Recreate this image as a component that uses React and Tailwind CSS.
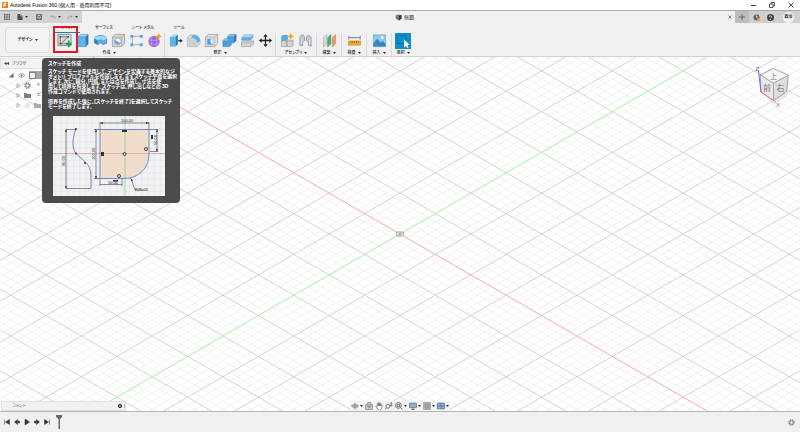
import React from 'react';
import clsx from 'clsx';

const FONT = "font-['Liberation_Sans','Noto_Sans_CJK_JP',sans-serif]";

/* ---------- small shared pieces ---------- */

function Svg({ className = 'size-4', box = '0 0 16 16', children }) {
  return (
    <svg viewBox={box} className={clsx('shrink-0', className)} fill="none" aria-hidden="true">
      {children}
    </svg>
  );
}

function Caret({ className = 'w-[3px] h-[2px]' }) {
  return (
    <Svg box="0 0 6 4" className={className}>
      <path d="M0 0h6L3 4z" fill="#333" />
    </Svg>
  );
}

/* ---------- toolbar icons ---------- */

const icons = {
  sketch: (
    <>
      <path d="M1 1.500h14v12H1z" fill="#dcdcdc" stroke="#8e8e8e" />
      <path d="M3.500 4v7.500h6.500M3.500 4h8.500M12 4L4 11.500" stroke="#555" strokeWidth=".8" />
      <path d="M2.700 3.200h1.700v1.700H2.700zM11.200 3.200h1.700v1.700h-1.700zM2.700 10.600h1.700v1.700H2.700z" fill="#444" />
      <path d="M10 9h2.200V6.800h2V9h2v2.200h-2v2.600h-2v-2.600H10z" transform="translate(-.6 1.500)" fill="#22a447" />
    </>
  ),
  extrude: (
    <>
      <path d="M3 4l3-2.500h8L11.500 4z" fill="#a5d4f5" />
      <path d="M3 4h8.500v10.500H3z" fill="#62b2ec" />
      <path d="M11.500 4L14 1.500V12l-2.500 2.500z" fill="#2579bd" />
      <path d="M3 4l3-2.500h8V12l-2.500 2.500H3zM3 4h8.500L14 1.500M11.500 4v10.500" stroke="#2f79b2" strokeWidth=".5" />
    </>
  ),
  revolve: (
    <>
      <path d="M1.500 6C2 1.500 14 1.500 14.500 6v5l-4 1.500C10 10 6 10 5.500 12.500l-4-2z" fill="#5aaee8" stroke="#2a6fa8" strokeWidth=".6" />
      <path d="M1.500 6C2 2 14 2 14.500 6L11 8C10 6.500 6 6.500 5 8z" fill="#a4d3f3" />
      <path d="M5 8v4.500L1.500 10.500V6z" fill="#2f7fbe" />
    </>
  ),
  hole: (
    <>
      <path d="M1.500 4.500l3-3h10v9.500l-3 3.500h-10z" fill="#d9d9d9" stroke="#8d8d8d" strokeWidth=".7" />
      <path d="M1.500 4.500h10v10M11.500 4.500l3-3" stroke="#9a9a9a" strokeWidth=".6" />
      <circle cx="7" cy="9" r="3.700" fill="#f7f7f7" stroke="#7b8d9c" strokeWidth=".6" />
      <path d="M4 7.200L10 11.200A3.700 3.700 0 014 7.200z" fill="#4ea6e4" />
    </>
  ),
  pattern: (
    <>
      <path d="M3.500 3.500h9.500M3.500 3.500v9h9.500" stroke="#8d99a3" strokeWidth=".8" />
      <path d="M1.500 2h3v3h-3zM11.500 2h3v3h-3zM1.500 11h3v3h-3zM11.500 11h3v3h-3z" fill="#53a4dc" />
    </>
  ),
  form: (
    <>
      <circle cx="7.500" cy="9" r="6" fill="#9669cf" />
      <path d="M2 6.500c3 2 8 2 11 0M1.700 10.500c3 2.200 8.500 2.200 11.600 0M5.500 3.500c-1.500 4-1.500 7.500 0 11M9.500 3.500c1.500 4 1.500 7.500 0 11" stroke="#c9b0ea" strokeWidth=".7" />
      <path d="M12.500 0l1 2.300L16 3.500l-2.500 1.200-1 2.300-1-2.300L9 3.500l2.500-1.200z" fill="#f5a21b" />
    </>
  ),
  pressPull: (
    <>
      <path d="M2 4l3-2.500h5L8 4z" fill="#a5d4f5" />
      <path d="M2 4h6v10.500H2z" fill="#62b2ec" />
      <path d="M8 4l2.500-2.500V12L8 14.500z" fill="#2579bd" />
      <path d="M11 7.500h2V6l2.800 2.200-2.800 2.300V9h-2z" fill="#333" />
    </>
  ),
  fillet: (
    <>
      <path d="M1.500 5l3-3h4c4 0 6.500 3 6.500 6.500V11l-3 3.500H1.500z" fill="#e0e0e0" stroke="#8f8f8f" strokeWidth=".6" />
      <path d="M5 5l2.500-3h1C12 2 15 5 15 8.500L12 11c0-3.500-3-6-7-6z" fill="#5eafe8" />
      <path d="M1.500 5H5c4 0 7 2.500 7 6.500v3H1.500z" fill="#cfcfcf" />
    </>
  ),
  shell: (
    <>
      <path d="M1.500 4.500l3-3h10v9.500l-3 3.500h-10z" fill="#e4e4e4" stroke="#8d8d8d" strokeWidth=".7" />
      <path d="M1.500 4.500h10v10M11.500 4.500l3-3" stroke="#9a9a9a" strokeWidth=".6" />
      <path d="M3.500 6.500h6v6h-6z" fill="#fff" stroke="#87929b" strokeWidth=".5" />
      <path d="M3.500 6.500v6h6L7 10V6.500z" fill="#4ea1dd" />
    </>
  ),
  combine: (
    <>
      <path d="M1 8l2-2h3V3.500L8 1.500h7V8l-2.500 2.500H10v2L8 14.500H1z" fill="#4b9fde" stroke="#2a70a9" strokeWidth=".5" />
      <path d="M6 3.500L8 1.500h7L12.800 3.500zM1 8l2-2h3v2z" fill="#8cc6f0" />
      <path d="M12.800 3.500L15 1.500V8l-2.200 2.500z" fill="#2878ba" />
    </>
  ),
  split: (
    <>
      <path d="M1.500 5l3-3.500h10l-1 4-2.500 2.500h-9.500z" fill="#5aace6" />
      <path d="M1.500 4.500l3-3h10l-3 3z" fill="#a3d3f4" />
      <path d="M1.500 10l2-1.500h11v3l-3 3h-10z" fill="#d5d5d5" stroke="#8b8b8b" strokeWidth=".6" />
      <path d="M1.500 10.500h10v4M11.500 10.500l3-2" stroke="#999" strokeWidth=".5" />
    </>
  ),
  move: (
    <path
      d="M8 1l2.300 3H8.700v3.300H12V5.700L15 8l-3 2.300V8.700H8.700V12h1.600L8 15l-2.300-3h1.600V8.700H4v1.600L1 8l3-2.300v1.600h3.300V4H5.700z"
      fill="#222"
    />
  ),
  component: (
    <>
      <path d="M1.500 4l1.500-1.500h5V8H1.500z" fill="#58aae6" stroke="#3a7fb5" strokeWidth=".4" />
      <path d="M1.500 8.500H7v6H1.500zM7.500 8.500H13v6H7.500z" fill="#d8d8d8" stroke="#8a8a8a" strokeWidth=".6" />
      <path d="M7.500 8.500L9 7h5.500L13 8.500zM13 8.500L14.500 7v6L13 14.500z" fill="#b9b9b9" />
      <path d="M11.500 0l1 2.300L15 3.500l-2.500 1.200-1 2.300-1-2.300L8 3.500l2.500-1.200z" fill="#f5a21b" />
    </>
  ),
  joint: (
    <>
      <path d="M2 13V6c0-5 5-5 5-1v3l-2 1v4.500zM14 14V6.500c0-5-5-5-5-1V8l2 1v4z" fill="#c6cbcf" stroke="#818b93" strokeWidth=".8" />
      <path d="M4 12V6.500M12.500 12.500V7" stroke="#eef1f3" strokeWidth=".9" />
    </>
  ),
  construct: (
    <>
      <path d="M1.500 5L5 1.500v10L1.500 15z" fill="#d9d9d9" stroke="#999" strokeWidth=".5" />
      <path d="M6 5l3.500-3.500v10L6 15z" fill="#48b07c" stroke="#2e8a5b" strokeWidth=".5" />
      <path d="M11 5l3.500-3.500v10L11 15z" fill="#f09a66" stroke="#c8743f" strokeWidth=".5" />
    </>
  ),
  inspect: (
    <>
      <path d="M2 3v4M14 3v4M2.500 5h11" stroke="#666" strokeWidth=".9" />
      <path d="M1.500 8.500h13v4.500h-13z" fill="#f0a932" stroke="#b87a17" strokeWidth=".5" />
      <path d="M4 8.500v2M6 8.500v2M8 8.500v2M10 8.500v2M12 8.500v2" stroke="#7c4f08" strokeWidth=".6" />
    </>
  ),
  insert: (
    <>
      <path d="M1.500 2h13v12.500h-13z" fill="#8fc8ee" stroke="#5b9bc9" strokeWidth=".6" />
      <path d="M1.500 14.500V11L5.500 6l4 4.500 2-2 3 3v3z" fill="#3585c0" />
      <circle cx="11" cy="5" r="1.500" fill="#fff" />
    </>
  ),
  select: (
    <>
      <path d="M0 0h16v16H0z" fill="#0d8ecb" />
      <path d="M2.500 2.500h8.500v8H2.500z" stroke="#0b5f8a" strokeWidth=".7" strokeDasharray="1.500 1" />
      <path d="M9 6.500v8l2-1.800 1.200 2.600 1.400-.7-1.200-2.500h2.600z" fill="#fff" />
    </>
  ),
};

const groups = [
  {
    label: '作成',
    pad: 'pr-px',
    items: [
      ['sketch', 'スケッチを作成'],
      ['extrude', '押し出し'],
      ['revolve', '回転'],
      ['hole', '穴'],
      ['pattern', '矩形状パターン'],
      ['form', 'フォームを作成'],
    ],
  },
  {
    label: '修正',
    pad: 'border-l px-px',
    items: [
      ['pressPull', 'プレス/プル'],
      ['fillet', 'フィレット'],
      ['shell', 'シェル'],
      ['combine', '結合'],
      ['split', 'ボディを分割'],
      ['move', '移動'],
    ],
  },
  {
    label: 'アセンブリ',
    pad: 'border-l px-[2px]',
    items: [
      ['component', '新規コンポーネント'],
      ['joint', 'ジョイント'],
    ],
  },
  { label: '構築', pad: 'border-l px-[3px]', items: [['construct', '平面']] },
  { label: '検査', pad: 'border-l px-[3px]', items: [['inspect', '計測']] },
  { label: '挿入', pad: 'border-l px-[3px]', items: [['insert', 'キャンバス']] },
  { label: '選択', pad: 'border-l px-[2px]', items: [['select', '選択ツール']] },
];

function TitleBar() {
  return (
    <header className="flex h-[10px] items-center bg-white pl-[2px] pr-[6px]">
      <Svg className="size-[6px]" box="0 0 12 12">
        <path d="M0 0h12v12H0z" fill="#f07d1a" />
        <path d="M4 10V2.500h5M4 6h4" stroke="#fff" strokeWidth="2" />
      </Svg>
      <h1 className="ml-[2px] flex-1 text-[5px] leading-[8px] text-black">
        Autodesk Fusion 360 (個人用 - 商用利用不可)
      </h1>
      <div className="flex gap-[13px]">
        <button type="button" aria-label="最小化">
          <Svg className="size-[5px]" box="0 0 10 10">
            <path d="M0 5h10" stroke="#222" strokeWidth="1.800" />
          </Svg>
        </button>
        <button type="button" aria-label="元のサイズに戻す">
          <Svg className="size-[6px]" box="0 0 12 12">
            <path d="M1 4h7v7H1zM4 4V1h7v7H8" stroke="#222" strokeWidth="1.500" />
          </Svg>
        </button>
        <button type="button" aria-label="閉じる">
          <Svg className="size-[6px]" box="0 0 12 12">
            <path d="M1 1l10 10M11 1L1 11" stroke="#222" strokeWidth="1.500" />
          </Svg>
        </button>
      </div>
    </header>
  );
}

function DocumentBar() {
  return (
    <div className="flex h-[13px] items-stretch border-t border-[#a9a9a9] bg-[#f0f0f0]">
      <div className="flex w-[82px] items-center bg-[#d2d2d2] pl-[4px]">
        <button type="button" aria-label="データ パネル">
          <Svg className="size-[6px]" box="0 0 12 12">
            <path d="M0 0h3v3H0zM4.500 0h3v3h-3zM9 0h3v3H9zM0 4.500h3v3H0zM4.500 4.500h3v3h-3zM9 4.500h3v3H9zM0 9h3v3H0zM4.500 9h3v3h-3zM9 9h3v3H9z" fill="#555" />
          </Svg>
        </button>
        <button type="button" aria-label="ファイル" className="ml-[7px] flex items-center gap-[2px]">
          <Svg className="size-[6px]" box="0 0 12 12">
            <path d="M1 0h6l4 4v8H1z" fill="#4d4d4d" />
            <path d="M7 0v4h4" stroke="#ddd" />
          </Svg>
          <Caret />
        </button>
        <button type="button" aria-label="保存" className="ml-[8px]">
          <Svg className="size-[6px]" box="0 0 12 12">
            <path d="M1 1h10v10H1zM3 1v4h6V1M3 11V8h6v3" stroke="#555" strokeWidth="1.500" />
          </Svg>
        </button>
        <button type="button" aria-label="元に戻す" className="ml-[8px] flex items-center gap-[2px]">
          <Svg className="size-[6px]" box="0 0 12 12">
            <path d="M5 2L2 5l3 3M2 5h5c3 0 4 2 3 5" stroke="#9a9a9a" strokeWidth="1.600" />
          </Svg>
          <Caret />
        </button>
        <button type="button" aria-label="やり直し" className="ml-[6px] flex items-center gap-[2px]">
          <Svg className="size-[6px]" box="0 0 12 12">
            <path d="M7 2l3 3-3 3M10 5H5C2 5 1 7 2 10" stroke="#9a9a9a" strokeWidth="1.600" />
          </Svg>
          <Caret />
        </button>
      </div>
      <div className="flex flex-1 items-center justify-center gap-[2px] text-[5px] leading-[6px] text-[#222]">
        <Svg className="size-[7px]" box="0 0 14 14">
          <path d="M1 3l5-2 7 1v7l-5 4-6-3z" fill="#777" />
          <path d="M8 4l5-2v7l-5 4z" fill="#333" />
        </Svg>
        無題
      </div>
      <button type="button" aria-label="タブを閉じる" className="mr-[2px] px-px">
        <Svg className="size-[4px]" box="0 0 8 8">
          <path d="M1 1l6 6M7 1L1 7" stroke="#444" strokeWidth="1.300" />
        </Svg>
      </button>
      <div className="flex w-[65px] items-center bg-[#cfcfcf]">
        <button type="button" aria-label="新規デザイン" className="flex h-full w-[14px] items-center justify-center bg-[#bdbdbd]">
          <Svg className="size-[6px]" box="0 0 12 12">
            <path d="M6 0v12M0 6h12" stroke="#666" strokeWidth="2" />
          </Svg>
        </button>
        <button type="button" aria-label="ジョブ ステータス" className="ml-[4px]">
          <Svg className="size-[7px]" box="0 0 14 14">
            <circle cx="7" cy="7" r="6" fill="#606060" />
            <path d="M7 3v4l3-2" stroke="#fff" strokeWidth="1.300" />
            <circle cx="11" cy="11" r="3" fill="#f0a030" />
          </Svg>
        </button>
        <button type="button" aria-label="ヘルプ" className="ml-[7px]">
          <Svg className="size-[7px]" box="0 0 14 14">
            <circle cx="7" cy="7" r="7" fill="#444" />
            <path d="M5 5.500C5 3 9 3 9 5.500 9 7 7 7 7 8.500M7 10v1.500" stroke="#fff" strokeWidth="1.500" />
          </Svg>
        </button>
        <button type="button" className="ml-[9px] flex size-[11px] shrink-0 items-center justify-center rounded-full bg-[#f4f4f4] text-[4px] leading-[6px] font-bold whitespace-nowrap text-[#222]">
          政治
        </button>
      </div>
    </div>
  );
}

function Toolbar() {
  return (
    <div className="flex h-[34px] border-b border-[#d0d0d0] bg-[#f0f0f0] pl-[5px]">
      <button
        type="button"
        className="mt-[4px] mr-[5px] flex h-[26px] w-[45px] items-center justify-center gap-[2px] rounded-sm border border-[#dcdcdc] bg-[#f3f3f3] text-[4px] font-bold text-[#222]"
      >
        デザイン <Caret />
      </button>
      <div className="flex flex-col">
        <nav className="flex h-[10px] text-[4px] leading-[8px] font-medium whitespace-nowrap text-[#333]">
          <button type="button" className="w-[25px] border-b border-[#1b80b4]">ソリッド</button>
          <button type="button" className="ml-[15px]">サーフェス</button>
          <button type="button" className="ml-[19px]">シート メタル</button>
          <button type="button" className="ml-[19px]">ツール</button>
        </nav>
        <div className="flex">
          {groups.map((group) => (
            <section key={group.label} className={clsx('flex flex-col items-center border-[#dadada]', group.pad)}>
              <div className="flex h-4">
                {group.items.map(([icon, name]) => (
                  <button key={icon} type="button" aria-label={name} className="relative flex w-[18px] justify-center">
                    <Svg className={icon === 'select' ? 'size-4' : 'size-[15px]'}>{icons[icon]}</Svg>
                    {icon === 'sketch' && (
                      <span className="absolute -top-[7px] -left-[2px] h-[27px] w-[25px] border-2 border-[#e81523]" />
                    )}
                  </button>
                ))}
              </div>
              <button type="button" className="flex items-center gap-[2px] text-[4px] leading-[7px] font-medium whitespace-nowrap text-[#222]">
                {group.label} <Caret />
              </button>
            </section>
          ))}
        </div>
      </div>
    </div>
  );
}

/* ---------- canvas ---------- */

const STEP_X = 7.08;
const STEP_Y = 4.08;

function Grid() {
  const lines = [];
  for (let i = -120; i <= 120; i++) {
    const y = i * STEP_Y * 2;
    const major = i % 5 === 0;
    const reach = 800;
    const rise = (reach * STEP_Y) / STEP_X;
    const color = major ? '#cacaca' : '#eeeeee';
    if (i !== 0) {
      lines.push({ d: `M${-reach} ${y - rise}L${reach} ${y + rise}`, color, major });
      lines.push({ d: `M${-reach} ${y + rise}L${reach} ${y - rise}`, color, major });
    }
  }
  // major lines go on top of the minor ones
  lines.sort((a, b) => a.major - b.major);
  return (
    <svg viewBox="-400 -177 800 354" preserveAspectRatio="xMidYMid slice" className="absolute inset-0 size-full" aria-hidden="true">
      {lines.map((line) => (
        <path key={line.d} d={line.d} stroke={line.color} strokeWidth={line.major ? 0.8 : 0.7} />
      ))}
      <path d="M-800 -461L800 461" stroke="#f2a3a3" strokeWidth=".9" />
      <path d="M-800 461L800 -461" stroke="#9fec9f" strokeWidth=".9" />
      <rect x="-3.500" y="-2" width="7" height="4" rx="1" fill="#e8e8e0" stroke="#8f9380" strokeWidth=".8" />
      <circle r="1" fill="#8f9380" />
    </svg>
  );
}

function ViewCube() {
  return (
    <svg viewBox="750 62 50 48" className="absolute top-[5px] right-0 h-[48px] w-[50px]" role="img" aria-label="ビューキューブ">
      <path d="M761 93l13 9 14-10-1 4-13 9z" fill="#ddd" opacity=".7" />
      <path d="M773.500 68.500L760.300 74.700l13 8.600 15-8z" fill="#f4f4f4" />
      <path d="M760.300 74.700L761 92l12.700 8.700-.4-17.400z" fill="#e9e9e9" />
      <path d="M788.300 75.300l-15 8 .4 17.400 13-9.400z" fill="#dedede" />
      <path d="M773.500 68.500L760.300 74.700 761 92l12.700 8.700 13-9.400 1.600-16zM760.300 74.700l13 8.600 15-8M773.300 83.300l.4 17.400" fill="none" stroke="#8f8f8f" strokeWidth=".8" />
      <path d="M758.500 71L761 92" stroke="#6a6ae8" strokeWidth="1" />
      <path d="M761 92l15 10" stroke="#e08080" strokeWidth="1" />
      <text x="755.500" y="71" fontSize="6" fill="#5555e0">Z</text>
      <text x="776" y="106.500" fontSize="6" fill="#e05555">X</text>
      <text x="770" y="78.500" fontSize="7" fill="#777">上</text>
      <text x="763" y="91" fontSize="8" fill="#777">前</text>
      <text x="776.500" y="91" fontSize="8" fill="#777">右</text>
    </svg>
  );
}

function Arrow({ open }) {
  return (
    <Svg className="size-[5px]" box="0 0 10 10">
      {open ? <path d="M9 0v9H0z" fill="#666" /> : <path d="M2 1l6 4-6 4z" stroke="#777" />}
    </Svg>
  );
}

function Eye({ dim }) {
  return (
    <Svg className="h-[5px] w-[7px]" box="0 0 14 10">
      <path d="M1 5c3-5 9-5 12 0-3 5-9 5-12 0z" stroke={dim ? '#ccc' : '#777'} strokeWidth="1.300" />
      <circle cx="7" cy="5" r="2" fill={dim ? '#ccc' : '#777'} />
    </Svg>
  );
}

function Folder({ dim }) {
  return (
    <Svg className="h-[5px] w-[7px]" box="0 0 14 10">
      <path d="M0 0h5l1 2h8v8H0z" fill={dim ? '#aaa' : '#808080'} />
    </Svg>
  );
}

function Gear({ className = 'size-[7px]' }) {
  return (
    <Svg className={className} box="0 0 14 14">
      <circle cx="7" cy="7" r="5" stroke="#777" strokeWidth="3" strokeDasharray="2.200 1.730" />
      <circle cx="7" cy="7" r="3.500" stroke="#777" strokeWidth="1.500" />
    </Svg>
  );
}

function BrowserPanel() {
  return (
    <aside className="relative w-[127px] text-[4px] leading-[10px] text-[#444]">
      <h2 className="flex h-[11px] items-center gap-[3px] border border-[#e2e2e2] bg-[#f3f3f3] pl-[3px]">
        <Svg className="h-[3px] w-[5px]" box="0 0 10 6">
          <path d="M5 0v6L0 3zM10 0v6L5 3z" fill="#333" />
        </Svg>
        ブラウザ
      </h2>
      <ul className="pt-px">
        <li className="flex h-[10px] items-center gap-[4px] pl-[9px]">
          <Arrow open />
          <Eye />
          <span className="flex h-[8px] w-[60px] items-center bg-[#a5a5a5]">
            <Svg className="size-[7px]" box="0 0 14 14">
              <path d="M1 1h12v12H1z" fill="#f3f3f3" stroke="#666" strokeWidth="1.500" />
            </Svg>
          </span>
        </li>
        <li className="flex h-[10px] items-center gap-[3px] pl-[16px]">
          <Arrow />
          <Gear />
          <span className="pl-[3px]">ド</span>
        </li>
        <li className="flex h-[10px] items-center gap-[3px] pl-[16px]">
          <Arrow />
          <Folder />
          <span className="pl-[3px]">ビ</span>
        </li>
        <li className="flex h-[10px] items-center gap-[3px] pl-[16px]">
          <Arrow />
          <Eye dim />
          <Folder dim />
        </li>
      </ul>
    </aside>
  );
}

function SketchPreview() {
  return (
    <svg viewBox="0 0 112 80" className="mt-[7px] ml-[5px] w-[112px] bg-[#f1f2f4] font-normal" role="img" aria-label="スケッチの例">
      {Array.from({ length: 19 }, (_, i) => (
        <path key={`v${i}`} d={`M${2 + i * 6.2} 0v80`} stroke="#e1e3e6" strokeWidth=".6" />
      ))}
      {Array.from({ length: 13 }, (_, i) => (
        <path key={`h${i}`} d={`M0 ${1 + i * 6.2}h112`} stroke="#e1e3e6" strokeWidth=".6" />
      ))}
      <path d="M47 13.500h49V38c0 14-10 24-24 24.500H47z" fill="#f0dccb" />
      <path d="M0 37.500h112" stroke="#e99a9a" strokeWidth=".7" />
      <path d="M72 0v80" stroke="#90c890" strokeWidth=".7" />
      <path d="M47 13.500h49V38c0 14-10 24-24 24.500H47z" fill="none" stroke="#7585c8" strokeWidth="1" />
      <path d="M23 13c-3 8-5 18 0 24.500C29 44 38 47 38 60v12" fill="none" stroke="#7585c8" strokeWidth="1" />
      {/* dimension lines */}
      <path d="M13 13.500h10M13 13.500v59h25M43 13.500v49M41 13.500h6M41 62.500h6M47 6v7M96 6v7M47 7h49M96 13.500h9M104 13.500V35M97 35.500h8M47 63v7M69 63v7M47 68.500h22M78 62.500L82 74h9" fill="none" stroke="#444" strokeWidth=".6" />
      <path d="M12 16l1-3 1 3zM12 70l1 3 1-3zM42 16l1-3 1 3zM42 60l1 3 1-3zM50 6l-3 1 3 1zM93 6l3 1-3 1zM103 16l1-3 1 3zM103 33l1 3 1-3zM77.500 62l2.500 2.500-1.500.8z" fill="#333" />
      <g fill="#333">
        <circle cx="23" cy="13" r="1" />
        <circle cx="23" cy="37.500" r="1" />
        <circle cx="32" cy="47" r="1" />
        <path d="M69 14h5v2h-5zM48 36h3v4h-3zM98 19h2v4h-2zM60 64h5v1.500h-5z" />
      </g>
      <g fill="none" stroke="#333" strokeWidth=".9">
        <circle cx="71.500" cy="38" r="1.500" />
        <circle cx="93" cy="33" r="1.500" />
        <circle cx="66" cy="60" r="1.500" />
      </g>
      <g fill="#222" fontSize="4">
        <text x="68" y="6">100.00</text>
        <text x="82" y="75">R25.00</text>
        <text x="55" y="68">50.00</text>
        <text transform="translate(12 50) rotate(-90)">90.00</text>
        <text transform="translate(42 44) rotate(-90)">100.00</text>
        <text transform="translate(103.500 29) rotate(-90)">50.00</text>
      </g>
    </svg>
  );
}

function Tooltip() {
  return (
    <div
      role="tooltip"
      className="absolute top-px left-[42px] w-[138px] rounded bg-[#4b4b4b] px-[6px] pt-[2px] pb-[7px] text-[5px] leading-[5px] font-bold whitespace-nowrap text-white"
    >
      <h3 className="mb-[3px] leading-[6px]">スケッチを作成</h3>
      <p>
        スケッチ モードを使用して、デザインを定義する基本的なジ<br />
        オメトリ プロファイルを作成します。まずスケッチ平面を選択<br />
        します。次に、線分、円弧、または点を作成し、寸法を使<br />
        用して境界を拘束します。スケッチは、押し出しなどの 3D<br />
        作成コマンドで使用されます。
      </p>
      <p className="mt-[5px]">
        境界を作成した後に、[スケッチを終了]を選択してスケッチ<br />
        モードを終了します。
      </p>
      <SketchPreview />
    </div>
  );
}

const navTools = [
  {
    name: 'オービット',
    menu: true,
    art: <path d="M7 1v12M4 4L1 7l3 3M10 4l3 3-3 3M3 7c2 3 6 3 8 0-2-3-6-3-8 0z" stroke="#555" strokeWidth="1.200" />,
  },
  {
    name: 'ビュー正面',
    art: <path d="M1 5h12v8H1zM3 5l2-4h5l1 4M3 8h8M5 10h4" stroke="#777" strokeWidth="1.200" fill="#d0d0d0" />,
  },
  {
    name: '画面移動',
    art: <path d="M4 8V3.500a1 1 0 012 0V7 2a1 1 0 012 0v5-4a1 1 0 012 0v4-2a1 1 0 012 0v4c0 3-2 5-4 5S5 13 4 11L1.500 8C2 6.500 3 7 4 8z" stroke="#555" fill="#fff" />,
  },
  {
    name: 'ズーム',
    art: <path d="M5 4a3.500 3.500 0 100 7 3.500 3.500 0 000-7zM2.500 10L0 13M11 1v6M9 3l2-2 2 2M9 5.500l2 2 2-2" stroke="#555" strokeWidth="1.300" />,
  },
  {
    name: 'フィット',
    menu: true,
    art: <path d="M6 1a5 5 0 100 10A5 5 0 006 1zM9.500 9.500L13 13M4 4h4v4H4z" stroke="#555" strokeWidth="1.400" />,
  },
  {
    name: '表示設定',
    menu: true,
    art: (
      <>
        <path d="M1 2h12v8H1z" fill="#8db3d4" stroke="#506a84" strokeWidth="1.200" />
        <path d="M7 10v3M4 13h6" stroke="#555" strokeWidth="1.300" />
      </>
    ),
  },
  {
    name: 'グリッドとスナップ',
    menu: true,
    art: <path d="M1 1h12v12H1zM1 4h12M1 7h12M1 10h12M4 1v12M7 1v12M10 1v12" fill="#c5c5c5" stroke="#888" />,
  },
  {
    name: 'ビューポート',
    menu: true,
    art: <path d="M1 2h12v10H1zM7 2v10M1 7h12" fill="#8fb8dc" stroke="#476f9d" strokeWidth="1.400" />,
  },
];

function CanvasFooter() {
  return (
    <div className="relative mt-auto flex h-[11px] items-center">
      <div className="ml-px flex h-[10px] w-[125px] items-center border border-[#e0e0e0] bg-[#f1f1f1] pl-[10px] text-[4px] text-[#555]">
        <span className="flex-1">コメント</span>
        <button type="button" aria-label="コメントを追加" className="mr-[2px]">
          <Svg className="size-[4px]" box="0 0 8 8">
            <circle cx="4" cy="4" r="4" fill="#222" />
            <path d="M4 2v4M2 4h4" stroke="#fff" strokeWidth="1" />
          </Svg>
        </button>
        <span className="h-[4px] w-px bg-[#bbb]" />
      </div>
      <div className="absolute inset-x-0 flex justify-center">
        <div className="flex h-[10px] items-center gap-[2px] bg-[#f3f3f3] px-px">
          {navTools.map((tool) => (
            <button key={tool.name} type="button" aria-label={tool.name} className="flex items-center gap-px">
              <Svg className="size-[8px]" box="0 0 14 14">{tool.art}</Svg>
              {tool.menu && <Caret />}
            </button>
          ))}
        </div>
      </div>
    </div>
  );
}

const playback = [
  ['先頭へ', 'M1 1v10M11 1L3 6l8 5z'],
  ['前へ', 'M7 1L1 6l6 5zM8 4h3v4H8z'],
  ['再生', 'M2 0l9 6-9 6z'],
  ['次へ', 'M5 1l6 5-6 5zM1 4h3v4H1z'],
  ['末尾へ', 'M11 1v10M1 1l8 5-8 5z'],
];

function Timeline() {
  return (
    <footer className="flex h-[21px] items-center border-t border-[#b5b5b5] bg-[#f0f0f0] pl-[4px] pr-[5px]">
      <div className="flex gap-[4px]">
        {playback.map(([name, d]) => (
          <button key={name} type="button" aria-label={name}>
            <Svg className="size-[6px]" box="0 0 12 12">
              <path d={d} fill="#333" stroke="#333" strokeWidth="1" />
            </Svg>
          </button>
        ))}
      </div>
      <Svg className="ml-[6px] h-[14px] w-[6px]" box="0 0 6 14">
        <path d="M0 0h6v2L4 4v10H2.500V4L0 2z" fill="#666" />
      </Svg>
      <button type="button" aria-label="タイムラインの設定" className="ml-auto">
        <Gear />
      </button>
    </footer>
  );
}

export default function App() {
  return (
    <div
      lang="ja"
      className={clsx("flex min-h-screen flex-col overflow-hidden bg-[#f0f0f0] [font-feature-settings:'palt']", FONT)}
    >
      <TitleBar />
      <DocumentBar />
      <Toolbar />
      <main className="relative flex flex-1 flex-col overflow-hidden bg-[#fefefe] pt-px">
        <Grid />
        <BrowserPanel />
        <ViewCube />
        <Tooltip />
        <CanvasFooter />
      </main>
      <Timeline />
    </div>
  );
}
